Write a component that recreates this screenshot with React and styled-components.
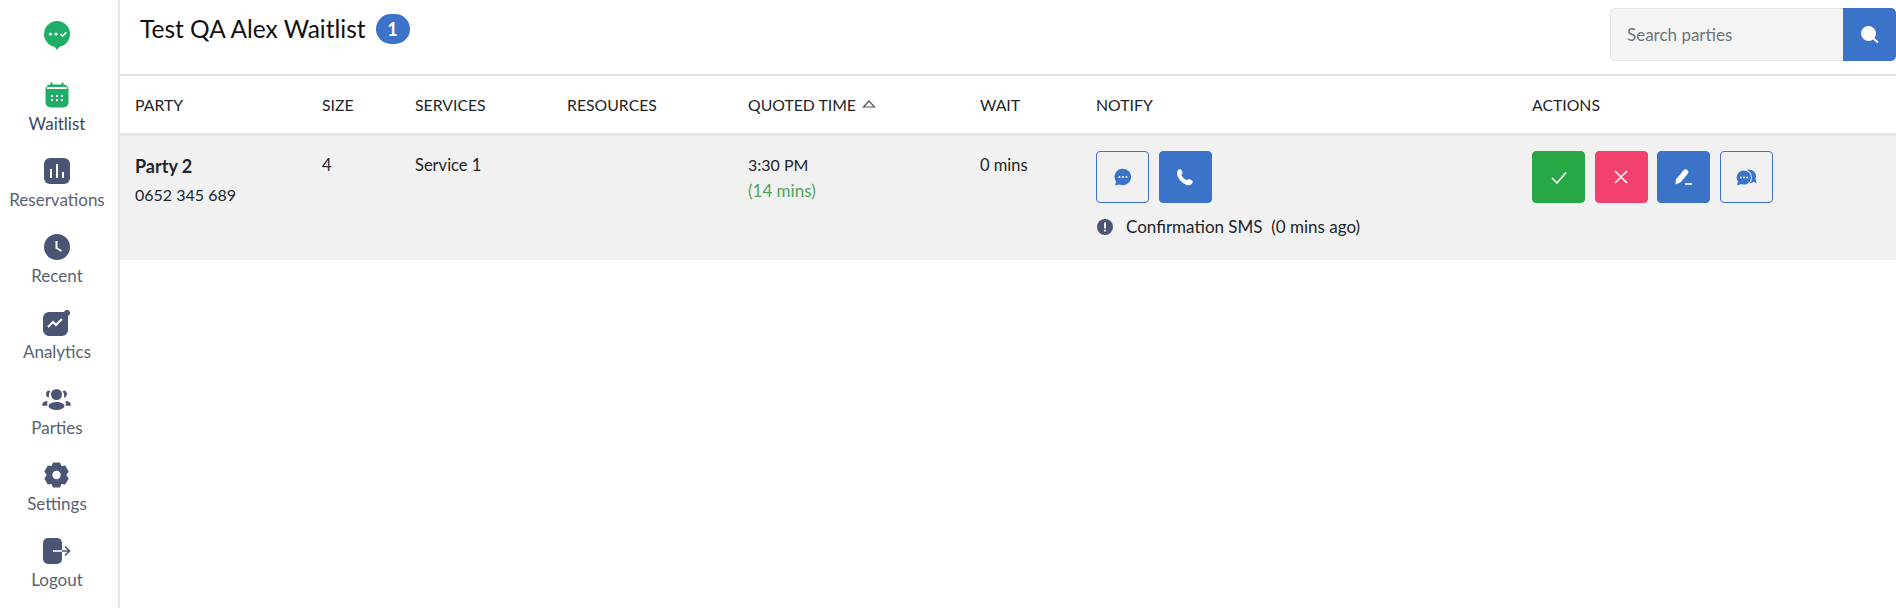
import React from 'react'
import styled, { createGlobalStyle } from 'styled-components'

const GlobalStyle = createGlobalStyle`
  html, body {
    margin: 0;
    padding: 0;
    background: #fff;
    height: 100%;
  }
  body {
    font-family: 'Lato', 'Noto Sans', sans-serif;
    color: #212529;
  }
`

const navy = '#4a5573'
const green = '#1fae68'
const blue = '#3b73c9'

const LogoIcon = () => (
  <svg width='26' height='29' viewBox='0 0 26 29'>
    <circle cx='13' cy='13' r='13' fill={green} />
    <path d='M10 25h6l-3 4z' fill={green} />
    <circle cx='6.500' cy='13' r='1.600' fill='#fff' />
    <circle cx='12' cy='13' r='1.600' fill='#fff' />
    <path d='M16.500 13l2.200 2.200 3.600-4' stroke='#fff' strokeWidth='1.600' fill='none' />
  </svg>
)

const CalendarIcon = () => (
  <svg width='24' height='26' viewBox='0 0 24 26'>
    <rect x='0.500' y='2.500' width='23' height='23' rx='5' fill={green} />
    <rect x='2' y='5' width='20' height='2' fill='#fff' />
    <rect x='5.500' y='0.500' width='2' height='4' fill={green} />
    <rect x='16.500' y='0.500' width='2' height='4' fill={green} />
    {[13, 17].flatMap((y) => [6, 11, 16].map((x) => (
      <rect key={`${x}-${y}`} x={x} y={y} width='2' height='2' fill='#fff' />
    )))}
  </svg>
)

const BarsIcon = () => (
  <svg width='26' height='26' viewBox='0 0 26 26'>
    <rect width='26' height='26' rx='6' fill={navy} />
    <rect x='6' y='11' width='2' height='9' fill='#fff' />
    <rect x='12' y='6' width='2' height='14' fill='#fff' />
    <rect x='18' y='14' width='2' height='6' fill='#fff' />
  </svg>
)

const ClockIcon = () => (
  <svg width='26' height='26' viewBox='0 0 26 26'>
    <circle cx='13' cy='13' r='13' fill={navy} />
    <path d='M12.500 7v7l5 3' stroke='#fff' strokeWidth='2' fill='none' />
  </svg>
)

const ChartIcon = () => (
  <svg width='28' height='26' viewBox='0 0 28 26'>
    <path d='M6 2h15a5 5 0 0 0 4 4v14a6 6 0 0 1-6 6H6a6 6 0 0 1-6-6V8a6 6 0 0 1 6-6z' fill={navy} />
    <circle cx='24' cy='3' r='3' fill={navy} />
    <path d='M5 17l5-5 3 3 6-6' stroke='#fff' strokeWidth='2' fill='none' />
  </svg>
)

const PartiesIcon = () => (
  <svg width='29' height='26' viewBox='0 -3 29 26'>
    <circle cx='14.500' cy='5.500' r='5.500' fill={navy} />
    <ellipse cx='14.500' cy='17' rx='8' ry='4' fill={navy} />
    <path d='M6 1.500a4 4 0 0 0-2 4 4 4 0 0 0 3 3.200c-.5-2 0-5 1.500-6.500z' fill={navy} />
    <path d='M23 1.500a4 4 0 0 1 2 4 4 4 0 0 1-3 3.200c.5-2 0-5-1.500-6.500z' fill={navy} />
    <path d='M0 16c.3-2.500 2.500-4 5.500-4-.5 1.500-.5 3 0 4.500-1.500 0-3.500 1-5.500-.5z' fill={navy} />
    <path d='M29 16c-.3-2.500-2.500-4-5.500-4 .5 1.500.5 3 0 4.500 1.500 0 3.500 1 5.500-.5z' fill={navy} />
  </svg>
)

const GearIcon = () => (
  <svg width='25' height='26' viewBox='0 0 25 26'>
    <path d='M9 .5h7l1.400 3.600 3.800-.6 3.500 6L22.300 13l2.400 3.500-3.500 6-3.800-.6L16 25.500H9l-1.400-3.600-3.800.6-3.500-6L2.700 13 .3 9.500l3.500-6 3.800.6z' fill={navy} />
    <circle cx='12.500' cy='13' r='4.200' fill='#fff' />
  </svg>
)

const LogoutIcon = () => (
  <svg width='28' height='26' viewBox='0 0 28 26'>
    <path d='M5 0h9a5 5 0 0 1 5 5v16a5 5 0 0 1-5 5H5a5 5 0 0 1-5-5V5a5 5 0 0 1 5-5z' fill={navy} />
    <path d='M10 13h9' stroke='#fff' strokeWidth='1.600' fill='none' />
    <path d='M19 13h7M22 8.500l4.500 4.500-4.500 4.500' stroke={navy} strokeWidth='1.600' fill='none' />
  </svg>
)

const ChatIcon = () => (
  <svg width='18' height='18' viewBox='0 0 18 18'>
    <path d='M9 .7a8.200 8.200 0 1 1-3.400 15.700L1 17.500l1.100-3.800A8.200 8.200 0 0 1 9 .7z' fill={blue} />
    <circle cx='5.500' cy='9' r='1' fill='#fff' />
    <circle cx='9' cy='9' r='1' fill='#fff' />
    <circle cx='12.500' cy='9' r='1' fill='#fff' />
  </svg>
)

const PhoneIcon = () => (
  <svg width='18' height='18' viewBox='0 0 18 18'>
    <path d='M4.600 1l2.300 3.800-1.500 2c.8 2.200 3 4.400 5.500 5.500l2-1.500 3.800 2.300c.3 2-1.200 4.200-3.500 4.200C7 17.300.8 10.500 1 4.300 1.100 2.300 2.700 1 4.600 1z' fill='#fff' />
  </svg>
)

const CheckIcon = () => (
  <svg width='16' height='13' viewBox='0 0 16 13'>
    <path d='M1 7l5 5L15 1.500' stroke='#fff' strokeWidth='1.500' fill='none' />
  </svg>
)

const CrossIcon = () => (
  <svg width='14' height='14' viewBox='0 0 14 14'>
    <path d='M1 1l12 12M13 1L1 13' stroke='#fff' strokeWidth='1.500' fill='none' />
  </svg>
)

const PenIcon = () => (
  <svg width='17' height='16' viewBox='0 0 17 16'>
    <path d='M10.500 3.200L4 11' stroke='#fff' strokeWidth='5.500' strokeLinecap='round' fill='none' />
    <path d='M.5 15.500l.4-5.500 4.200 3.500z' fill='#fff' />
    <rect x='10' y='14.200' width='7' height='1.600' fill='#fff' />
  </svg>
)

const ChatsIcon = () => (
  <svg width='21' height='17' viewBox='0 0 21 17'>
    <circle cx='13' cy='7.500' r='7' fill={blue} />
    <path d='M17 12l3.500 2.500-.8-5z' fill={blue} />
    <circle cx='8' cy='8.500' r='8' fill='#f1f1f1' />
    <path d='M8 1.500a7 7 0 1 1-2.600 13.500L1 16.500l1-4A7 7 0 0 1 8 1.500z' fill={blue} />
    <circle cx='4.800' cy='8.500' r='.9' fill='#fff' />
    <circle cx='8' cy='8.500' r='.9' fill='#fff' />
    <circle cx='11.200' cy='8.500' r='.9' fill='#fff' />
  </svg>
)

const SearchIcon = () => (
  <svg width='18' height='18' viewBox='0 0 18 18'>
    <circle cx='7.500' cy='7.500' r='7.500' fill='#fff' />
    <path d='M12 12l5 4.500' stroke='#fff' strokeWidth='1.800' />
  </svg>
)

const AlertIcon = () => (
  <svg width='16' height='16' viewBox='0 0 16 16'>
    <circle cx='8' cy='8' r='8' fill={navy} />
    <rect x='7.100' y='3.500' width='1.800' height='6' fill='#fff' />
    <rect x='7.100' y='10.700' width='1.800' height='1.800' fill='#fff' />
  </svg>
)

const SortIcon = () => (
  <svg width='14' height='8' viewBox='0 0 14 8'>
    <path d='M7 1l5.500 6h-11z' stroke='#555' strokeWidth='1.200' fill='none' />
  </svg>
)

const navItems = [
  { label: 'Waitlist', icon: <CalendarIcon />, active: true },
  { label: 'Reservations', icon: <BarsIcon /> },
  { label: 'Recent', icon: <ClockIcon /> },
  { label: 'Analytics', icon: <ChartIcon /> },
  { label: 'Parties', icon: <PartiesIcon /> },
  { label: 'Settings', icon: <GearIcon /> },
  { label: 'Logout', icon: <LogoutIcon /> },
]

const columns = ['PARTY', 'SIZE', 'SERVICES', 'RESOURCES', 'QUOTED TIME', 'WAIT', 'NOTIFY', 'ACTIONS']

export default function App() {
  return (
    <>
      <GlobalStyle />
      <Page>
        <Sidebar>
          <LogoSlot>
            <LogoIcon />
          </LogoSlot>
          {navItems.map((item) => (
            <NavItem key={item.label} $active={item.active}>
              <NavIcon>{item.icon}</NavIcon>
              {item.label}
            </NavItem>
          ))}
        </Sidebar>
        <Main>
          <Header>
            <TitleGroup>
              <Title>Test QA Alex Waitlist</Title>
              <CountBadge>1</CountBadge>
            </TitleGroup>
            <SearchBox>
              <SearchInput placeholder='Search parties' />
              <SearchButton>
                <SearchIcon />
              </SearchButton>
            </SearchBox>
          </Header>
          <HeadRow>
            {columns.map((col) => (
              <HeadCell key={col}>
                {col}
                {col === 'QUOTED TIME' && <SortIcon />}
              </HeadCell>
            ))}
          </HeadRow>
          <BodyRow>
            <Cell>
              <PartyName>Party 2</PartyName>
              <SubLine>0652 345 689</SubLine>
            </Cell>
            <Cell>4</Cell>
            <Cell>Service 1</Cell>
            <Cell />
            <Cell>
              <TimeLine>3:30 PM</TimeLine>
              <QuotedMins>(14 mins)</QuotedMins>
            </Cell>
            <Cell>0 mins</Cell>
            <ButtonCell>
              <ButtonRow>
                <IconButton $variant='outline'><ChatIcon /></IconButton>
                <IconButton $variant='blue'><PhoneIcon /></IconButton>
              </ButtonRow>
              <NoticeLine>
                <AlertIcon />
                <span>Confirmation SMS&nbsp; (0 mins ago)</span>
              </NoticeLine>
            </ButtonCell>
            <ButtonCell>
              <ButtonRow>
                <IconButton $variant='green'><CheckIcon /></IconButton>
                <IconButton $variant='red'><CrossIcon /></IconButton>
                <IconButton $variant='blue'><PenIcon /></IconButton>
                <IconButton $variant='outline'><ChatsIcon /></IconButton>
              </ButtonRow>
            </ButtonCell>
          </BodyRow>
        </Main>
      </Page>
    </>
  )
}

const Page = styled.div`
  display: flex;
  height: 608px;
  overflow: hidden;
`

const Sidebar = styled.nav`
  width: 120px;
  box-sizing: border-box;
  flex-shrink: 0;
  padding-right: 4px;
  border-right: 2px solid #e3e4e8;
  display: flex;
  flex-direction: column;
  align-items: center;
`

const LogoSlot = styled.div`
  height: 81px;
  flex-shrink: 0;
  padding-top: 21px;
  box-sizing: border-box;
  display: flex;
  justify-content: center;
`

const NavItem = styled.a`
  height: 76px;
  flex-shrink: 0;
  display: flex;
  flex-direction: column;
  align-items: center;
  font-size: 17px;
  line-height: 20px;
  white-space: nowrap;
  color: ${(p) => (p.$active ? '#3c4560' : '#5a6275')};
`

const NavIcon = styled.div`
  height: 33px;
  padding-top: 1px;
  box-sizing: border-box;
  display: flex;
  align-items: flex-start;
  justify-content: center;
`

const Main = styled.main`
  flex: 1;
  min-width: 0;
`

const Header = styled.header`
  height: 76px;
  box-sizing: border-box;
  display: flex;
  justify-content: space-between;
  align-items: flex-start;
  padding: 8px 0 0 20px;
  border-bottom: 2px solid #e3e4e8;
`

const TitleGroup = styled.div`
  display: flex;
  align-items: center;
  gap: 10px;
  margin-top: 6px;
`

const Title = styled.h1`
  margin: 0;
  font-size: 24.500px;
  font-weight: 400;
  line-height: 30px;
  color: #111;
`

const CountBadge = styled.span`
  width: 34px;
  height: 30px;
  border-radius: 15px;
  background: ${blue};
  color: #fff;
  font-size: 18px;
  font-weight: 700;
  display: flex;
  align-items: center;
  justify-content: center;
`

const SearchBox = styled.div`
  display: flex;
  height: 53px;
  width: 286px;
`

const SearchInput = styled.input`
  flex: 1;
  min-width: 0;
  box-sizing: border-box;
  padding: 0 16px;
  background: #f4f4f5;
  border: 1px solid #e3e4e8;
  border-right: 0;
  border-radius: 5px 0 0 5px;
  font: 400 17px 'Lato', 'Noto Sans', sans-serif;
  outline: none;
  &::placeholder {
    color: #6c757d;
    opacity: 1;
  }
`

const SearchButton = styled.button`
  width: 53px;
  border: 0;
  background: ${blue};
  border-radius: 0 5px 5px 0;
  display: flex;
  align-items: center;
  justify-content: center;
  padding: 0;
`

const gridColumns = '187px 93px 152px 181px 232px 116px 436px 1fr'

const HeadRow = styled.div`
  display: grid;
  grid-template-columns: ${gridColumns};
  height: 60px;
  padding-bottom: 1px;
  box-sizing: border-box;
  border-bottom: 3px solid #e3e4e8;
  align-items: center;
`

const HeadCell = styled.div`
  padding-left: 15px;
  font-size: 15.800px;
  color: #212529;
  display: flex;
  align-items: center;
  gap: 6px;
`

const BodyRow = styled.div`
  display: grid;
  grid-template-columns: ${gridColumns};
  height: 124px;
  background: #f1f1f1;
`

const Cell = styled.div`
  padding: 17px 0 0 15px;
  font-size: 16.500px;
  line-height: 24px;
  color: #212529;
`

const PartyName = styled.div`
  margin-top: 1px;
  font-weight: 700;
  font-size: 18px;
  color: #212529;
`

const SubLine = styled.div`
  margin-top: 5px;
  font-size: 16px;
  line-height: 24px;
`

const TimeLine = styled.div`
  font-size: 16px;
`

const QuotedMins = styled.div`
  margin-top: 2px;
  font-size: 17px;
  color: #4fa35a;
`

const ButtonCell = styled.div`
  padding: 15px 0 0 15px;
`

const ButtonRow = styled.div`
  display: flex;
  gap: 9.700px;
`

const variantStyles = {
  outline: `background: transparent; border: 1px solid ${blue};`,
  blue: `background: ${blue}; border: 1px solid ${blue};`,
  green: 'background: #28a745; border: 1px solid #28a745;',
  red: 'background: #f1416c; border: 1px solid #f1416c;',
}

const IconButton = styled.button`
  width: 53px;
  height: 52px;
  padding: 0;
  border-radius: 4px;
  display: flex;
  align-items: center;
  justify-content: center;
  ${(p) => variantStyles[p.$variant]}
`

const NoticeLine = styled.div`
  display: flex;
  align-items: center;
  gap: 13px;
  margin-top: 14px;
  padding-left: 1px;
  font-size: 17px;
  line-height: 20px;
  color: #212529;
`
